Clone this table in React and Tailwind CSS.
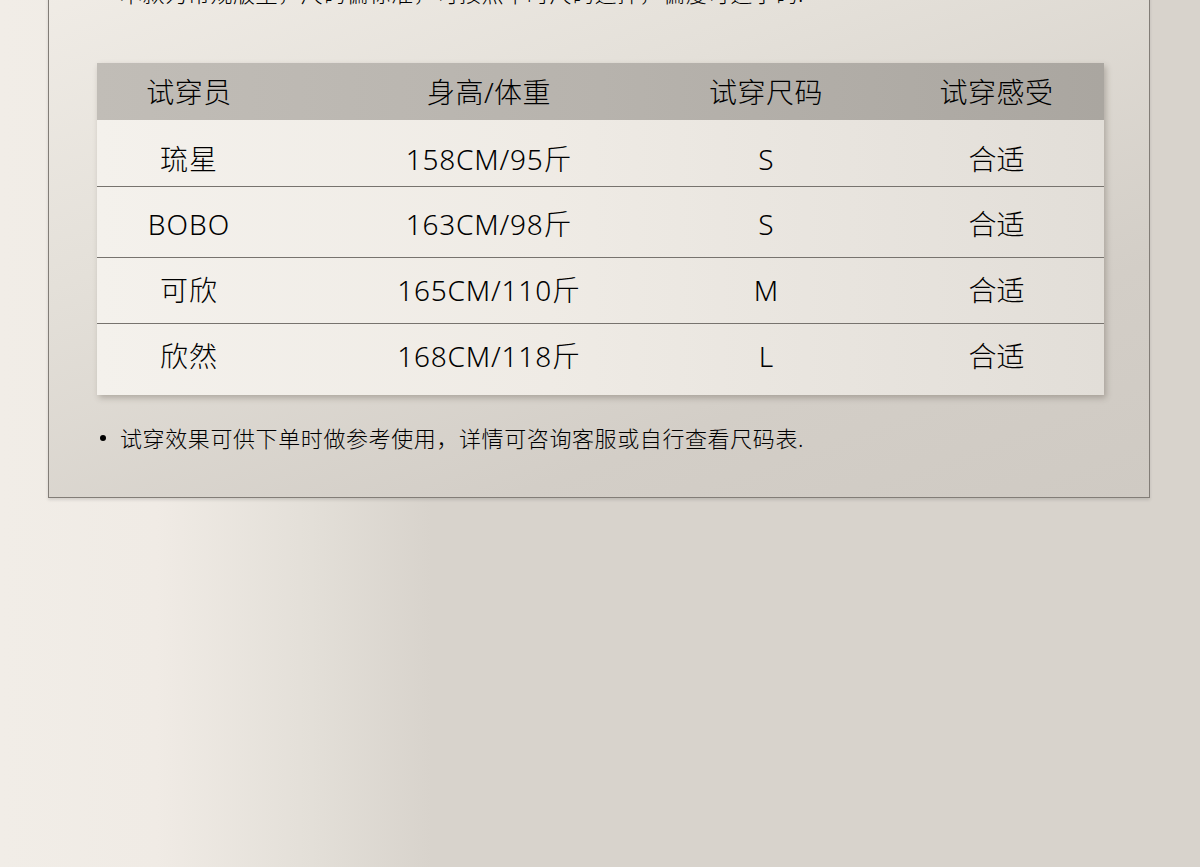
import React from "react";

const rows = [
  { name: "琉星", hw: "158CM/95斤", size: "S", feel: "合适", h: "h-[67px]", pt: "pt-[21px]", border: true },
  { name: "BOBO", hw: "163CM/98斤", size: "S", feel: "合适", h: "h-[71px]", pt: "pt-[19px]", border: true },
  { name: "可欣", hw: "165CM/110斤", size: "M", feel: "合适", h: "h-[66px]", pt: "pt-[14px]", border: true },
  { name: "欣然", hw: "168CM/118斤", size: "L", feel: "合适", h: "h-[71px]", pt: "pt-[14px]", border: false },
];

const font = { fontFamily: '"Noto Sans", "Noto Sans CJK SC", sans-serif' };

export default function App() {
  return (
    <div
      className="w-[1200px] h-[867px] overflow-hidden bg-[linear-gradient(to_right,#f1ede7_0%,#f0ebe5_13%,#e3dfd8_26%,#d8d3cc_36%,#d8d3cc_100%)] text-black"
      style={font}
    >
      <div className="ml-[48px] w-[1102px] -mt-[40px] border border-[#827d77] bg-[linear-gradient(160deg,#f1ede7_0%,#e4e0d9_35%,#d3cec7_75%,#cfcac3_100%)] pl-[48px] pt-[17px] pb-[44px] shadow-[0_2px_3px_rgba(0,0,0,0.12)]">
        <div className="flex items-center h-[30px] text-[22px] tracking-[0.6px] leading-[30px] font-light">
          <span className="w-[6px] h-[6px] rounded-full bg-black ml-[3px] mr-[14px]" />
          <span>本款为常规版型，尺码偏标准，可按照平时尺码选择，偏瘦可选小码.</span>
        </div>

        <div className="mt-[55px] w-[1007px] shadow-[2px_3px_6px_rgba(60,50,40,0.28)]">
          <div className="grid grid-cols-[184px_416px_138px_1fr] h-[57px] items-center bg-[linear-gradient(to_right,#c1bdb7,#b7b3ad_50%,#aaa6a0)] text-[28px] text-black tracking-[0.5px] font-light">
            <div className="text-center">试穿员</div>
            <div className="text-center">身高/体重</div>
            <div className="text-center">试穿尺码</div>
            <div className="text-center pl-[54px]">试穿感受</div>
          </div>
          {rows.map((r, i) => (
            <div
              key={i}
              className={`grid grid-cols-[184px_416px_138px_1fr] ${r.h} ${r.pt} ${
                r.border ? "border-b border-[#77736e]" : ""
              } bg-[linear-gradient(to_right,#f4f1ec,#efebe5_45%,#e2ded8)] text-[28px] leading-[36px] font-light`}
            >
              <div className="text-center tracking-[1px]">{r.name}</div>
              <div className="text-center tracking-[0.8px]">{r.hw}</div>
              <div className="text-center">{r.size}</div>
              <div className="text-center pl-[54px]">{r.feel}</div>
            </div>
          ))}
        </div>

        <div className="mt-[28px] flex items-center h-[30px] text-[22px] tracking-[0.6px] leading-[30px] font-light">
          <span className="w-[6px] h-[6px] rounded-full bg-black ml-[3px] mr-[14px]" />
          <span>试穿效果可供下单时做参考使用，详情可咨询客服或自行查看尺码表.</span>
        </div>
      </div>
    </div>
  );
}
